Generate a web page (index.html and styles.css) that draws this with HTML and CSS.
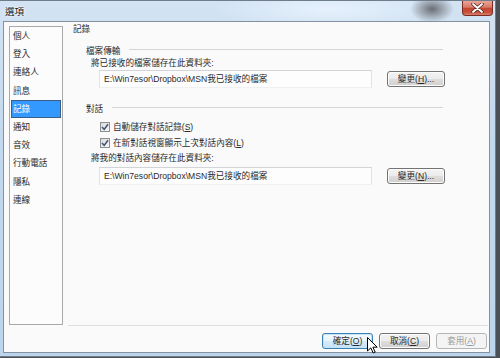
FILE: index.html
```html
<!DOCTYPE html>
<html>
<head>
    <title>選項</title>
    <link rel="stylesheet" href="styles.css">
</head>
<body>
    <div class="window">
        <div class="titlebar">
            <span class="title">選項</span>
            <div class="close-btn">
                <svg width="13" height="10" viewBox="0 0 13 10">
                    <path d="M2 1 L11 9 M11 1 L2 9" stroke="#5a2a24" stroke-width="3.4" stroke-linecap="round"/>
                    <path d="M2 1 L11 9 M11 1 L2 9" stroke="#ffffff" stroke-width="1.8" stroke-linecap="round"/>
                </svg>
            </div>
        </div>

        <div class="client">
            <div class="main">
                <ul class="nav">
                    <li>個人</li>
                    <li>登入</li>
                    <li>連絡人</li>
                    <li>訊息</li>
                    <li class="selected">記錄</li>
                    <li>通知</li>
                    <li>音效</li>
                    <li>行動電話</li>
                    <li>隱私</li>
                    <li>連線</li>
                </ul>

                <div class="panel">
                    <div class="heading">記錄</div>

                    <div class="group-header group-first"><span>檔案傳輸</span><i></i></div>
                    <div class="hint">將已接收的檔案儲存在此資料夾:</div>
                    <div class="field-row">
                        <div class="field">E:\Win7esor\Dropbox\MSN我已接收的檔案</div>
                        <button class="btn">變更(<u>H</u>)...</button>
                    </div>

                    <div class="group-header group-second"><span>對話</span><i></i></div>
                    <label class="check check-first">
                        <span class="box">
                            <svg width="8" height="8" viewBox="0 0 8 8"><path d="M1 4 L3.2 6.4 L7 1.2" fill="none" stroke="#3b4f78" stroke-width="1.5"/></svg>
                        </span>
                        自動儲存對話記錄(<u>S</u>)
                    </label>
                    <label class="check check-second">
                        <span class="box">
                            <svg width="8" height="8" viewBox="0 0 8 8"><path d="M1 4 L3.2 6.4 L7 1.2" fill="none" stroke="#3b4f78" stroke-width="1.5"/></svg>
                        </span>
                        在新對話視窗顯示上次對話內容(<u>L</u>)
                    </label>
                    <div class="hint hint-second">將我的對話內容儲存在此資料夾:</div>
                    <div class="field-row field-row-second">
                        <div class="field">E:\Win7esor\Dropbox\MSN我已接收的檔案</div>
                        <button class="btn">變更(<u>N</u>)...</button>
                    </div>
                </div>
            </div>

            <div class="footer">
                <button class="btn btn-default">確定(<u>O</u>)</button>
                <button class="btn">取消(<u>C</u>)</button>
                <button class="btn btn-disabled">套用(<u>A</u>)</button>
                <svg class="cursor" width="11" height="17" viewBox="0 0 11 17">
                    <path d="M0.5 0.5 L0.5 14 L3.8 10.9 L6.2 16 L8.2 15.1 L5.9 10.2 L10.2 10.2 Z" fill="#ffffff" stroke="#000000" stroke-width="1"/>
                </svg>
            </div>
        </div>
    </div>
</body>
</html>
```

FILE: styles.css
```css
body {
    margin: 0;
    background: #4a5056;
    font-family: "Liberation Sans", "Noto Sans CJK TC", sans-serif;
    font-size: 8.6px;
    color: #2a2a2a;
}
.window {
    width: 496px;
    height: 357px;
    box-sizing: border-box;
    border-top: 1px solid #6f7c8a;
    border-right: 1px solid #6f7c8a;
    border-bottom: 1px solid #6f7c8a;
    background:
        radial-gradient(ellipse 22px 14px at 432px 8px, rgba(70, 70, 75, 0.75), rgba(70, 70, 75, 0)),
        radial-gradient(ellipse 120px 20px at 330px 8px, rgba(235, 245, 255, 0.8), rgba(235, 245, 255, 0)),
        linear-gradient(to bottom, #d3e3f3, #c2d8ee 40%, #bdd5ec);
}
.titlebar {
    display: flex;
    align-items: flex-start;
    height: 20px;
    padding: 0 2px 0 5px;
}
.title {
    margin-top: 5px;
    line-height: 12px;
    font-size: 9.5px;
    color: #111;
    text-shadow: 0 0 4px #fff, 0 0 2px #fff;
}
.close-btn {
    margin-left: auto;
    width: 31px;
    height: 15px;
    box-sizing: border-box;
    border: 1px solid #7a2e24;
    border-top: none;
    border-radius: 0 0 4px 4px;
    background: linear-gradient(to bottom, #e9a598, #d97a68 45%, #c4452f 50%, #c8503a 80%, #d9806c);
    display: flex;
    align-items: center;
    justify-content: center;
}
.client {
    margin: 0 5px 0 3px;
    height: 332px;
    box-sizing: border-box;
    border: 1px solid #8391a0;
    background: #fafafa;
}
.main {
    display: flex;
    align-items: flex-start;
    padding-left: 5px;
}
.nav {
    list-style: none;
    margin: 4px 0 0 0;
    padding: 0;
    width: 54px;
    height: 299px;
    box-sizing: border-box;
    border: 1px solid #a9a9a9;
    background: #fcfcfc;
}
.nav li {
    height: 18.2px;
    line-height: 19px;
    margin: 0 1px;
    padding-left: 2px;
    box-sizing: border-box;
    white-space: nowrap;
}
.nav li.selected {
    background: #3399ff;
    border: 1px solid #3a5f86;
    padding-left: 1px;
    line-height: 17px;
    color: #fff;
}
.panel {
    margin-left: 5px;
    width: 420px;
    height: 304px;
    box-sizing: border-box;
    padding: 1px 0 0 5px;
    border-bottom: 1px solid #dedede;
}
.heading {
    line-height: 13px;
}
.group-header {
    display: flex;
    align-items: center;
    height: 12px;
    margin: 8px 45px 0 13px;
}
.group-header i {
    flex: 1;
    height: 1px;
    margin-left: 9px;
    margin-top: -2px;
    background: #d5d5d5;
}
.group-second {
    margin-top: 14px;
}
.hint {
    margin: 1px 0 0 18px;
    line-height: 12px;
}
.hint-second {
    margin-top: 3px;
}
.field-row {
    display: flex;
    align-items: center;
    margin: 1px 0 0 26px;
}
.field-row-second {
    margin-top: 3px;
}
.field {
    width: 273px;
    height: 18px;
    box-sizing: border-box;
    border: 1px solid;
    border-color: #d2d4d8 #e1e3e6 #eef0f2 #e1e3e6;
    background: #fdfdfd;
    padding-left: 4px;
    line-height: 17px;
    white-space: nowrap;
}
.btn {
    width: 58px;
    height: 16px;
    box-sizing: border-box;
    padding: 0;
    margin-left: 15px;
    border: 1px solid #737373;
    border-radius: 3px;
    background: linear-gradient(to bottom, #f3f3f3, #ebebeb 48%, #dddddd 52%, #d0d0d0);
    font-family: inherit;
    font-size: 8.6px;
    line-height: 14px;
    color: #2a2a2a;
    box-shadow: inset 0 0 0 1px #fcfcfc;
}
.check {
    display: flex;
    align-items: center;
    height: 12px;
    margin-left: 27px;
    line-height: 12px;
}
.check-first {
    margin-top: 7px;
}
.check-second {
    margin-top: 4px;
}
.box {
    width: 10px;
    height: 10px;
    box-sizing: border-box;
    border: 1px solid #8e8f8f;
    background: linear-gradient(135deg, #dcdcdc, #f6f6f6);
    display: flex;
    align-items: center;
    justify-content: center;
    margin-right: 3px;
}
.footer {
    position: relative;
    display: flex;
    justify-content: flex-end;
    gap: 6px;
    margin-top: 7px;
    padding-right: 2px;
}
.footer .btn {
    width: 51px;
    margin-left: 0;
}
.btn-default {
    border-color: #3c7fb1;
    background: linear-gradient(to bottom, #f4fafe, #e8f4fc 48%, #d6ebfa 52%, #c5e2f7);
    box-shadow: inset 0 0 0 1px #c4e5f6;
}
.btn-disabled {
    border-color: #b3b7ba;
    background: #f4f4f4;
    color: #9a9a9a;
    box-shadow: none;
}
.cursor {
    position: absolute;
    left: 363px;
    top: 4px;
}
```
